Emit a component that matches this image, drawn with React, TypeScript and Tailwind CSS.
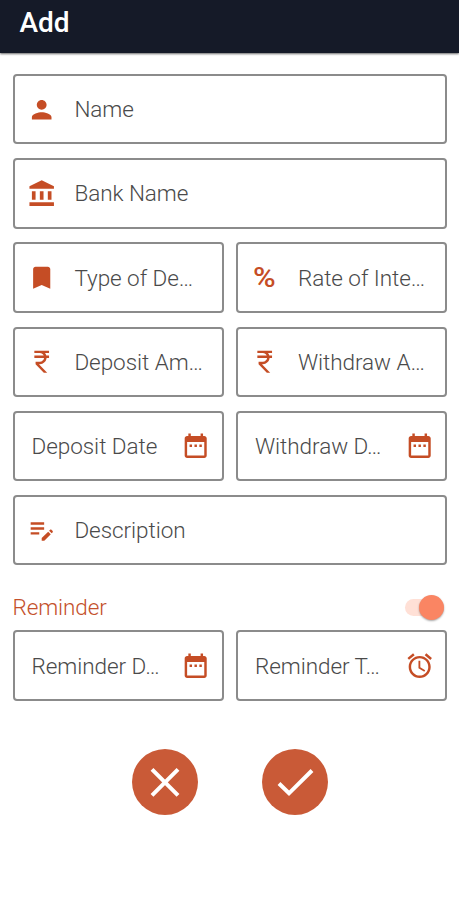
import React from "react";

const paths = {
  person:
    "M12 12c2.21 0 4-1.79 4-4s-1.79-4-4-4-4 1.79-4 4 1.79 4 4 4zm0 2c-2.67 0-8 1.34-8 4v2h16v-2c0-2.66-5.33-4-8-4z",
  bank: "M4 10h3v7H4zM10.5 10h3v7h-3zM2 19h20v3H2zM17 10h3v7h-3zM12 1 2 6v2h20V6z",
  bookmark: "M17 3H7c-1.1 0-1.99.9-1.99 2L5 21l7-3 7 3V5c0-1.1-.9-2-2-2z",
  rupee:
    "M13.66 7c-.56-1.18-1.76-2-3.16-2H6V3h12v2h-3.26c.48.58.84 1.26 1.05 2H18v2h-2.02c-.25 2.8-2.61 5-5.48 5h-.73l6.73 7h-2.77L7 14v-2h3.5c1.76 0 3.22-1.3 3.46-3H6V7h7.66z",
  calendar:
    "M9 11H7v2h2v-2zm4 0h-2v2h2v-2zm4 0h-2v2h2v-2zm2-7h-1V2h-2v2H8V2H6v2H5c-1.11 0-1.99.9-1.99 2L3 20c0 1.1.89 2 2 2h14c1.1 0 2-.9 2-2V6c0-1.1-.9-2-2-2zm0 16H5V9h14v11z",
  alarm:
    "M22 5.72l-4.6-3.86-1.29 1.53 4.6 3.86L22 5.72zM7.88 3.39L6.6 1.86 2 5.71l1.29 1.53 4.59-3.85zM12.5 8H11v6l4.75 2.85.75-1.23-4-2.37V8zM12 4c-4.97 0-9 4.03-9 9s4.02 9 9 9c4.97 0 9-4.03 9-9s-4.03-9-9-9zm0 16c-3.87 0-7-3.13-7-7s3.13-7 7-7 7 3.13 7 7-3.13 7-7 7z",
  note: "M3 10h11v2H3v-2zm0-2h11V6H3v2zm0 8h7v-2H3v2zm15.01-3.13.71-.71c.39-.39 1.02-.39 1.41 0l.71.71c.39.39.39 1.02 0 1.41l-.71.71-2.12-2.12zm-.71.71-5.3 5.3V21h2.12l5.3-5.3-2.12-2.12z",
};

type IconName = keyof typeof paths;

function Icon({ name }: { name: IconName }) {
  return (
    <svg viewBox="0 0 24 24" className="size-[29.4px] shrink-0 fill-[#c54d25]">
      <path d={paths[name]} />
    </svg>
  );
}

interface FieldProps {
  label: string;
  icon?: IconName | "percent";
  trailing?: IconName;
}

function Field({ label, icon, trailing }: FieldProps) {
  return (
    <div className="flex h-[70.4px] min-w-0 flex-1 items-center rounded-[4px] border-2 border-[#8b8b8b] pr-[11px] pl-[12px]">
      {icon && (
        <span className="mr-[18.5px] flex w-[29.4px] shrink-0 justify-center">
          {icon === "percent" ? (
            <span className="scale-x-110 pt-px text-[28px] leading-none font-medium text-[#c54d25]">%</span>
          ) : (
            <Icon name={icon} />
          )}
        </span>
      )}
      <span
        className={`flex-1 text-[22.5px] leading-7 font-light tracking-[-0.05px] whitespace-nowrap text-[#4a4a4a] ${icon ? "" : "pl-[5px]"}`}
      >
        {label}
      </span>
      {trailing && <Icon name={trailing} />}
    </div>
  );
}

function Row({ children }: { children: React.ReactNode }) {
  return <div className="flex gap-[12.5px]">{children}</div>;
}

export default function App() {
  return (
    <div className="flex h-[900px] w-[459px] flex-col overflow-hidden bg-white font-[Roboto,sans-serif]">
      <header className="h-[53px] shrink-0 bg-[#151a28] pl-[19.5px] shadow-[0_1px_2px_rgba(0,0,0,0.6)]">
        <h1 className="pt-[4.5px] text-[28px] leading-9 font-medium text-white">Add</h1>
      </header>
      <main className="flex flex-col pt-[21px] pr-[12px] pl-[12.5px]">
        <div className="flex flex-col gap-[13.8px]">
          <Row>
            <Field icon="person" label="Name" />
          </Row>
          <Row>
            <Field icon="bank" label="Bank Name" />
          </Row>
          <Row>
            <Field icon="bookmark" label="Type of De…" />
            <Field icon="percent" label="Rate of Inte…" />
          </Row>
          <Row>
            <Field icon="rupee" label="Deposit Am…" />
            <Field icon="rupee" label="Withdraw A…" />
          </Row>
          <Row>
            <Field label="Deposit Date" trailing="calendar" />
            <Field label="Withdraw D…" trailing="calendar" />
          </Row>
          <Row>
            <Field icon="note" label="Description" />
          </Row>
        </div>
        <div className="mt-[28px] flex h-[28px] items-center justify-between pr-[3.5px]">
          <span className="text-[22.5px] leading-7 font-[350] tracking-[-0.1px] text-[#c4512c]">Reminder</span>
          <div className="flex h-[17px] w-[38.5px] items-center justify-end rounded-full bg-[#ffe0d6]">
            <div className="size-[24.5px] shrink-0 rounded-full bg-[#fa8563] shadow-[0_1px_2px_rgba(0,0,0,0.35)]" />
          </div>
        </div>
        <div className="mt-[9px]">
          <Row>
            <Field label="Reminder D…" trailing="calendar" />
            <Field label="Reminder T…" trailing="alarm" />
          </Row>
        </div>
        <div className="mt-[48px] flex justify-center gap-[64px]">
          <button className="flex size-[66px] items-center justify-center rounded-full bg-[#c95a37]">
            <svg viewBox="0 0 66 66" className="size-[66px] fill-none stroke-white stroke-[4]">
              <path d="M20 20.3 46 46.3M46 20.3 20 46.3" />
            </svg>
          </button>
          <button className="flex size-[66px] items-center justify-center rounded-full bg-[#c95a37]">
            <svg viewBox="0 0 66 66" className="size-[66px] fill-none stroke-white stroke-[4]">
              <path d="M17 34.5 27 44.3 50 21.5" />
            </svg>
          </button>
        </div>
      </main>
    </div>
  );
}
